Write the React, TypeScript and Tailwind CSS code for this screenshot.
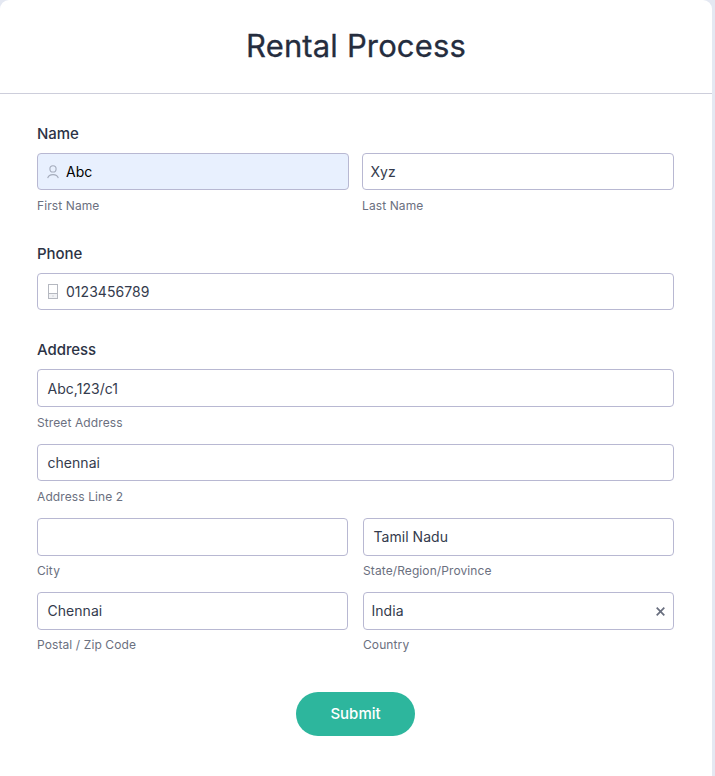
import type { ReactNode } from 'react';

type FieldProps = {
  value?: string;
  caption?: string;
  height?: string;
  captionGap?: string;
  pad?: string;
  tone?: string;
  icon?: ReactNode;
  trailing?: ReactNode;
};

function Field({
  value = '',
  caption,
  height = 'h-[37px]',
  captionGap = 'mt-2',
  pad = 'pl-[9.5px]',
  tone = 'bg-white text-[#343b4d]',
  icon,
  trailing,
}: FieldProps) {
  return (
    <div className="min-w-0 flex-1">
      <div className={`flex items-center rounded border border-[#b8b8d2] pr-2 ${height} ${pad} ${tone}`}>
        {icon}
        <span className="text-[14px] leading-5 tracking-[0.04px]">{value}</span>
        {trailing}
      </div>
      {caption && (
        <div className={`h-4 text-[12px] leading-4 tracking-[0.1px] text-[#6b7080] ${captionGap}`}>{caption}</div>
      )}
    </div>
  );
}

function Label({ children }: { children: ReactNode }) {
  return (
    <div className="mb-[9px] h-5 text-[15px] font-medium leading-5 tracking-[-0.06px] text-[#2c3345]">{children}</div>
  );
}

function UserIcon() {
  return (
    <svg className="mr-[7px] shrink-0" width="12" height="14" viewBox="0 0 12 14" fill="none" stroke="#a5acbc" strokeWidth="1.1">
      <circle cx="6" cy="3.900" r="3.100" />
      <path d="M.7 13.200C1.300 10.900 3.300 9.600 6 9.600s4.700 1.300 5.300 3.600" />
    </svg>
  );
}

function PhoneIcon() {
  return (
    <svg className="mr-[8px] shrink-0" width="10" height="15" viewBox="0 0 10 15" fill="none" stroke="#b5b8c0" strokeWidth="1">
      <path d="M1 10h8v4H1z" fill="#f1f2f5" stroke="none" />
      <rect x=".5" y=".5" width="9" height="14" />
      <path d="M.5 9.500h9M4.500 12h1" />
    </svg>
  );
}

function ClearIcon() {
  return (
    <svg className="ml-auto shrink-0" width="9" height="9" viewBox="0 0 9 9" stroke="#686e7e" strokeWidth="1.700">
      <path d="M.7.7l7.600 7.600M8.300.7L.7 8.300" />
    </svg>
  );
}

export default function App() {
  return (
    <div className="h-[776px] w-[715px] overflow-hidden bg-[#e4e8f2] pr-[3px] font-['Inter',sans-serif]">
      <div className="h-full rounded-t-[9px] bg-white">
        <header className="flex h-[94px] items-center justify-center border-b border-[#cdcedb] pb-0.5">
          <h1 className="text-[31px] font-normal leading-10 tracking-[0.15px] text-[#252d3e] [-webkit-text-stroke:0.3px_#252d3e]">
            Rental Process
          </h1>
        </header>
        <form className="pl-[37px] pr-[38px] pt-[30px]">
          <section className="h-[120px]">
            <Label>Name</Label>
            <div className="flex gap-[13px]">
              <Field value="Abc" caption="First Name" pad="pl-[9px]" tone="bg-[#e8f0fe] text-black" icon={<UserIcon />} />
              <Field value="Xyz" caption="Last Name" pad="pl-[7.5px]" />
            </div>
          </section>
          <section className="h-24">
            <Label>Phone</Label>
            <Field value="0123456789" pad="pl-[10px]" icon={<PhoneIcon />} />
          </section>
          <section>
            <Label>Address</Label>
            <div className="h-[75px]">
              <Field value="Abc,123/c1" caption="Street Address" height="h-[38px] pt-px" />
            </div>
            <div className="h-[74px]">
              <Field value="chennai" caption="Address Line 2" />
            </div>
            <div className="flex h-[74px] gap-[15px]">
              <Field caption="City" height="h-[38px]" captionGap="mt-[7px]" />
              <Field value="Tamil Nadu" caption="State/Region/Province" height="h-[38px]" captionGap="mt-[7px]" />
            </div>
            <div className="flex h-[100px] gap-[15px]">
              <Field value="Chennai" caption="Postal / Zip Code" height="h-[38px]" captionGap="mt-[7px]" />
              <Field value="India" caption="Country" height="h-[38px]" captionGap="mt-[7px]" pad="pl-[7.5px]" trailing={<ClearIcon />} />
            </div>
          </section>
          <div className="flex justify-center">
            <button type="button" className="h-11 w-[119px] rounded-full bg-[#2db69d] text-[15px] font-medium text-white">
              Submit
            </button>
          </div>
        </form>
      </div>
    </div>
  );
}
